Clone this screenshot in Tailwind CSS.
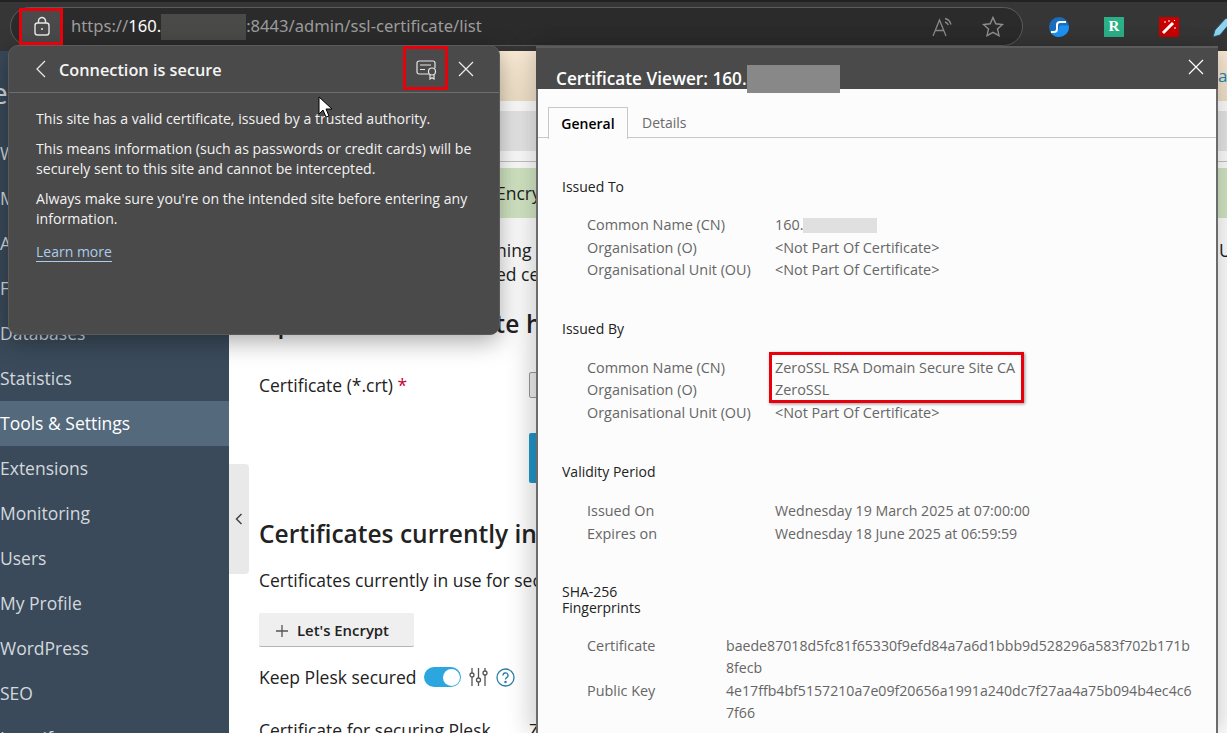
<!DOCTYPE html>
<html lang="en">
<head>
<meta charset="utf-8">
<title>SSL certificate</title>
<script src="https://cdn.jsdelivr.net/npm/@tailwindcss/browser@4"></script>
</head>
<body class="m-0">
<div class="relative w-[1227px] h-[733px] overflow-hidden flex flex-col bg-white font-['Open_Sans',sans-serif] text-[#222]">

  <!-- Browser toolbar -->
  <header class="h-[51px] shrink-0 bg-[#363636] border-t-2 border-[#222] flex items-center pl-[10px] relative">
    <div class="w-[1013px] h-[39px] shrink-0 rounded-full border border-[#5c5c5c] bg-[#2b2b2b] flex items-center">
      <div class="w-[41px] h-[33px] ml-[9px] pl-[3px] pb-[1px] bg-[#4a4a4a] rounded flex items-center justify-center">
        <svg width="18" height="20" viewBox="0 0 18 20" fill="none" stroke="#e8e8e8" stroke-width="1.4"><rect x="2" y="7" width="14" height="12" rx="2.5"/><path d="M5.5 7V5a3.5 3.5 0 0 1 7 0v2"/><circle cx="9" cy="13" r="1" fill="#e8e8e8" stroke="none"/></svg>
      </div>
      <div class="ml-[10px] flex items-center text-[16.6px] text-[#9d9d9d] font-['Noto_Sans',sans-serif]">
        <span>https://</span><span class="text-white">160.</span><span class="w-[85px] h-[26px] bg-[#4a4a48]"></span><span>:8443/admin/ssl-certificate/list</span>
      </div>
      <div class="ml-auto flex items-center gap-[28px] mr-[18px]">
        <svg width="22" height="20" viewBox="0 0 22 20" fill="none" stroke="#8a8a8a" stroke-width="1.3"><path d="M1 19 7.5 3 14 19M3.5 13.5h8"/><path d="M13 1.5c3 .6 5 2.6 6 6M13 5c1.600.4 2.700 1.400 3.300 3"/></svg>
        <svg width="22" height="21" viewBox="0 0 22 21" fill="none" stroke="#8f8f8f" stroke-width="1.4"><path d="M11 1.500 13.800 7.800 20.500 8.500 15.500 13 17 19.700 11 16.300 5 19.700 6.500 13 1.500 8.500 8.200 7.800Z"/></svg>
      </div>
    </div>
    <div class="ml-[26px] flex items-center gap-[35px]">
      <svg width="20" height="20" viewBox="0 0 20 20"><circle cx="10" cy="10" r="10" fill="#1a6cbd"/><path d="M20 10a10 10 0 0 1-10 10 10 10 0 0 1-9-5.500H6a4 4 0 0 0 4-4 2 2 0 0 1 2-2h7.500c.3.800.5 1.600.5 1.500Z" fill="#1e93f3"/><path d="M17 5h-6a3 3 0 0 0-3 3v4a3 3 0 0 1-3 3H2" fill="none" stroke="#fff" stroke-width="2"/></svg>
      <div class="w-[20px] h-[20px] bg-[#2bb088] flex items-center justify-center text-white text-[15px] font-bold font-['Liberation_Serif',serif] leading-none">R</div>
      <div class="w-[20px] h-[20px] bg-[#c80000] flex items-center justify-center">
        <svg width="16" height="16" viewBox="0 0 16 16"><path d="M2 14 12 4" stroke="#fff" stroke-width="3"/><path d="M3 3h2M8 1v2M14 8v2M13 1l1 1" stroke="#fff" stroke-width="1"/></svg>
      </div>
      <svg width="20" height="24" viewBox="0 0 20 24" class="-ml-[2px]"><path d="M1 22 3 15 14 3l5 4L8 20Z" fill="#8fd3ef" stroke="#27566e"/></svg>
    </div>
  </header>

  <!-- Page -->
  <div class="flex flex-1 min-h-0">
    <nav class="w-[229px] shrink-0 bg-[#3a4a5a] text-[17.5px] text-[#d3d8dd] overflow-hidden">
      <div class="h-[80px] flex items-center text-[30px] leading-none -ml-[9px] pt-[4px]">e</div>
      <div class="h-[45px] flex items-center">Websites &amp; Domains</div>
      <div class="h-[45px] flex items-center">Mail</div>
      <div class="h-[45px] flex items-center">Applications</div>
      <div class="h-[45px] flex items-center">Files</div>
      <div class="h-[45px] flex items-center">Databases</div>
      <div class="h-[45px] flex items-center">Statistics</div>
      <div class="h-[45px] flex items-center bg-[#54697c] text-white">Tools &amp; Settings</div>
      <div class="h-[45px] flex items-center">Extensions</div>
      <div class="h-[45px] flex items-center">Monitoring</div>
      <div class="h-[45px] flex items-center">Users</div>
      <div class="h-[45px] flex items-center">My Profile</div>
      <div class="h-[45px] flex items-center">WordPress</div>
      <div class="h-[45px] flex items-center">SEO</div>
      <div class="h-[45px] flex items-center">Imunify</div>
    </nav>

    <main class="relative flex-1 min-w-0 overflow-hidden">
      <div class="h-[50px] bg-gradient-to-b from-[#fdeed8] to-[#f1e2c9] flex justify-end items-center">
        <span class="w-[9px] overflow-hidden text-[17px] text-[#1d86b5]">aw</span>
      </div>
      <div class="h-[40px] mt-[10px] bg-[#e8e8e8]"></div>
      <div class="h-[1px] mt-[10px] bg-[#c4c4c4]"></div>
      <div class="h-[50px] mt-[6px] bg-[#d3e7c4] pl-[267px] text-[17.5px] flex items-center">Encrypt</div>
      <div class="mt-[20px] pl-[267px] pr-0 flex justify-between text-[17.5px] leading-[24px]">
        <span>ning</span><span class="w-[8px] overflow-hidden">U</span>
      </div>
      <div class="pl-[267px] text-[17.5px] leading-[24px]">ed certificate</div>
      <h2 class="mt-[22px] pl-[30px] text-[24.5px] leading-[32px] tracking-[0.2px] font-semibold whitespace-nowrap">Upload the certificate here</h2>
      <div class="mt-[33px] pl-[30px] flex">
        <span class="w-[270px] text-[17.5px] leading-[24px]">Certificate (*.crt) <span class="text-[#c8003c]">*</span></span>
        <span class="w-[80px] h-[26px] -mt-[1px] border border-[#999] bg-[#eee] rounded-[2px]"></span>
      </div>
      <div class="mt-[35px] ml-[300px] w-[120px] h-[50px] bg-[#2196c9] rounded-[2px]"></div>
      <h2 class="mt-[34px] pl-[30px] text-[24.5px] leading-[34px] font-semibold whitespace-nowrap">Certificates currently in use</h2>
      <p class="mt-[17px] pl-[30px] text-[17.5px] leading-[24px] whitespace-nowrap">Certificates currently in use for securing</p>
      <button class="mt-[21px] ml-[30px] w-[155px] h-[34px] pt-[2px] bg-[#efefef] border-b border-[#b5b5b5] rounded-[2px] flex items-center pl-[17px] gap-[9px] text-[14.9px] font-semibold">
        <svg width="12" height="12" viewBox="0 0 12 12" stroke="#555" stroke-width="1.300"><path d="M6 0v12M0 6h12"/></svg>Let's Encrypt
      </button>
      <div class="mt-[18px] pl-[30px] flex items-center h-[24px] text-[17.5px]">
        <span>Keep Plesk secured</span>
        <span class="ml-[8px] w-[37px] h-[20px] rounded-full bg-[#2ba6df] flex items-center justify-end pr-[1px]"><span class="w-[17px] h-[17px] rounded-full bg-white"></span></span>
        <svg class="ml-[8px]" width="19" height="20" viewBox="0 0 19 20" fill="none" stroke="#555" stroke-width="1.300"><path d="M3 1v5M3 10v9M9.500 1v10M9.500 15v4M16 1v3M16 8v11"/><circle cx="3" cy="8" r="2"/><circle cx="9.500" cy="13" r="2"/><circle cx="16" cy="6" r="2"/></svg>
        <svg class="ml-[8px]" width="19" height="19" viewBox="0 0 19 19" fill="none" stroke="#2a7ea6" stroke-width="1.300"><circle cx="9.500" cy="9.500" r="8.500"/><path d="M7 7.500a2.500 2.500 0 1 1 3.600 2.200c-.8.400-1.100.9-1.100 1.800"/><circle cx="9.500" cy="14" r=".6" fill="#2a7ea6"/></svg>
      </div>
      <div class="mt-[29px] pl-[30px] flex text-[17.5px] leading-[24px] whitespace-nowrap">
        <span class="w-[270px]">Certificate for securing Plesk</span><span>Z</span>
      </div>

      <!-- collapse handle -->
      <div class="absolute left-0 top-[413px] w-[20px] h-[110px] bg-[#e9e9e9] rounded-r-[4px] flex items-center justify-center">
        <svg width="8" height="12" viewBox="0 0 8 12" fill="none" stroke="#444" stroke-width="1.500"><path d="M6.500 1 1.500 6l5 5"/></svg>
      </div>
    </main>
  </div>

  <!-- Connection popover -->
  <section class="absolute left-[8px] top-[45px] w-[492px] h-[290px] bg-[#4a4a4a] border border-[#5a5a5a] rounded-[10px] shadow-[0_6px_24px_rgba(0,0,0,0.35)] text-[#f2f2f2] font-['Open_Sans',sans-serif]">
    <div class="h-[47px] border-b border-[#6e6e6e] flex items-center pl-[26px] pr-[25px]">
      <svg width="11" height="18" viewBox="0 0 11 18" fill="none" stroke="#e6e6e6" stroke-width="1.300"><path d="M10 1 2 9l8 8"/></svg>
      <span class="ml-[13px] text-[16.3px] leading-[24px] mt-[2px] font-semibold text-[#f5f5f5]">Connection is secure</span>
      <svg class="ml-auto mt-[1px] mr-[-1px]" width="21" height="20" viewBox="0 0 21 20" fill="none" stroke="#e6e6e6" stroke-width="1.200"><path d="M13 14H3a2 2 0 0 1-2-2V3a2 2 0 0 1 2-2h14a2 2 0 0 1 2 2v5"/><path d="M4 5h11M4 9.500h5"/><circle cx="16" cy="11.500" r="3.500"/><path d="M14 15v4l2-1.200 2 1.200v-4"/></svg>
      <svg class="ml-[22px]" width="16" height="16" viewBox="0 0 16 16" fill="none" stroke="#eee" stroke-width="1.200"><path d="M1 1l14 14M15 1 1 15"/></svg>
    </div>
    <div class="pl-[27px] pr-[18px] pt-[16px] text-[14.12px] leading-[20px]">
      <p>This site has a valid certificate, issued by a trusted authority.</p>
      <p class="mt-[10px]">This means information (such as passwords or credit cards) will be securely sent to this site and cannot be intercepted.</p>
      <p class="mt-[10px]">Always make sure you're on the intended site before entering any information.</p>
      <a class="inline-block mt-[13px] text-[#a9cdea] border-b border-[#a9cdea] leading-[19px] text-[14px]">Learn more</a>
    </div>
  </section>

  <!-- Certificate viewer -->
  <section class="absolute left-[536px] top-[46px] w-[682px] h-[687px] bg-[#fcfcfc] border-l-2 border-r-2 border-[#6b6b6b] shadow-[-10px_0_20px_rgba(0,0,0,0.14),10px_0_20px_rgba(0,0,0,0.12)] font-['Open_Sans',sans-serif] text-[14.4px]">
    <div class="relative h-[43px] bg-[#4a4a4a] border-t-2 border-[#5c5c5c] -mx-[2px] pl-[20px]">
      <div class="flex items-start pt-[19px] font-semibold text-[17.2px] leading-[23px] text-white">
        <span>Certificate Viewer: 160.</span><span class="w-[93px] h-[28px] -mt-[2px] bg-[#888]"></span>
      </div>
      <svg class="absolute right-[14px] top-[11px]" width="16" height="16" viewBox="0 0 16 16" fill="none" stroke="#fff" stroke-width="1.200"><path d="M1 1l14 14M15 1 1 15"/></svg>
    </div>
    <div class="mt-[18px] h-[31px] border-b border-[#c8c8c8] flex pl-[10px] text-[14px]">
      <div class="w-[80px] h-[32px] bg-[#fcfcfc] border border-b-0 border-[#c8c8c8] flex items-center justify-center font-semibold text-black">General</div>
      <div class="ml-[14px] h-[31px] flex items-center text-[#6a6a6a]">Details</div>
    </div>
    <div class="pl-[24px] text-[#666] leading-[22.500px]">
      <h3 class="mt-[38px] text-[14px] text-[#222] leading-[22px]">Issued To</h3>
      <dl class="mt-[16px] ml-[25px] grid grid-cols-[188px_1fr]">
        <dt>Common Name (CN)</dt><dd class="flex items-center">160.<span class="w-[74px] h-[15px] bg-[#e0e0e0]"></span></dd>
        <dt>Organisation (O)</dt><dd>&lt;Not Part Of Certificate&gt;</dd>
        <dt>Organisational Unit (OU)</dt><dd>&lt;Not Part Of Certificate&gt;</dd>
      </dl>
      <h3 class="mt-[36px] text-[14px] text-[#222] leading-[22px]">Issued By</h3>
      <dl class="mt-[17px] ml-[25px] grid grid-cols-[188px_1fr]">
        <dt>Common Name (CN)</dt><dd>ZeroSSL RSA Domain Secure Site CA</dd>
        <dt>Organisation (O)</dt><dd>ZeroSSL</dd>
        <dt>Organisational Unit (OU)</dt><dd>&lt;Not Part Of Certificate&gt;</dd>
      </dl>
      <h3 class="mt-[37px] text-[14px] text-[#222] leading-[22px]">Validity Period</h3>
      <dl class="mt-[17px] ml-[25px] grid grid-cols-[188px_1fr]">
        <dt>Issued On</dt><dd class="text-[14.2px]">Wednesday 19 March 2025 at 07:00:00</dd>
        <dt>Expires on</dt><dd class="text-[14.2px]">Wednesday 18 June 2025 at 06:59:59</dd>
      </dl>
      <h3 class="mt-[39px] text-[14px] text-[#222] leading-[16px]">SHA-256<br>Fingerprints</h3>
      <dl class="mt-[19px] ml-[25px] grid grid-cols-[139px_466px] gap-y-[2px] leading-[21.500px]">
        <dt>Certificate</dt><dd class="break-all text-[14.15px]">baede87018d5fc81f65330f9efd84a7a6d1bbb9d528296a583f702b171b8fecb</dd>
        <dt>Public Key</dt><dd class="break-all text-[14.15px]">4e17ffb4bf5157210a7e09f20656a1991a240dc7f27aa4a75b094b4ec4c67f66</dd>
      </dl>
    </div>
  </section>

  <!-- Annotations -->
  <div class="absolute left-[19px] top-[8px] w-[44px] h-[37px] border-[3px] border-[#e8000a]"></div>
  <div class="absolute left-[403px] top-[46px] w-[45px] h-[44px] border-[3px] border-[#e8000a]"></div>
  <div class="absolute left-[769px] top-[352px] w-[255px] h-[51px] border-[3px] border-[#e8000a] shadow-[1px_1px_3px_rgba(0,0,0,0.4)]"></div>

  <!-- Cursor -->
  <svg class="absolute left-[318px] top-[96px]" width="15" height="23" viewBox="0 0 15 23"><path d="M1 1v17l4-4 3 7 3-1-3-7h6Z" fill="#fff" stroke="#000" stroke-width="1"/></svg>
</div>
</body>
</html>
